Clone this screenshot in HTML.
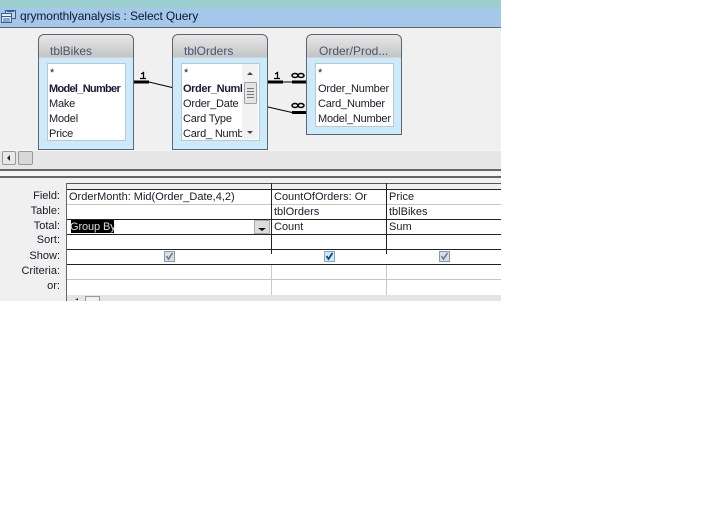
<!DOCTYPE html>
<html><head><meta charset="utf-8">
<style>
html,body{margin:0;padding:0;background:#fff}
body{width:704px;height:528px;position:relative;overflow:hidden;font-family:"Liberation Sans",sans-serif;font-size:11px;color:#1a1a2a}
.a{position:absolute}
.t{position:absolute;white-space:nowrap;line-height:15px;height:15px}
.f{letter-spacing:-.2px}
.tbl{position:absolute;box-sizing:border-box;border:1px solid #5a6670;border-radius:6px 6px 0 0;background:linear-gradient(#e8e8e8 0,#c4c4c4 22px,#cdeafb 23px,#cdeafb 100%)}
.tbl .h{position:absolute;left:11px;top:9px;font-size:12px;color:#46566e;white-space:nowrap}
.list{position:absolute;background:#fff;border:1px solid #b4c8d6;box-sizing:border-box;overflow:hidden}
.h1{position:absolute;left:66px;width:435px;height:1px;background:#222}
.v{position:absolute;width:1px}
.lab{position:absolute;right:644px;white-space:nowrap;line-height:15px;font-size:11px}
.cb{position:absolute;width:11px;height:11px;box-sizing:border-box;border:1px solid #8a9aa8;background:#d6dee6}
</style></head><body>
<div class="a" style="left:0;top:0;width:501px;height:8px;background:#9ccfcd"></div>
<div class="a" style="left:0;top:8px;width:501px;height:19px;background:#a4c8ec"></div>
<div class="a" style="left:0;top:27px;width:501px;height:1px;background:#666"></div>
<svg class="a" style="left:1px;top:9px" width="15" height="15" viewBox="0 0 15 15"><rect x="4.5" y="1.5" width="10" height="8" fill="#b8d0ea" stroke="#3a5c90"/><rect x="0.5" y="4.5" width="10" height="9" fill="#e8f0f8" stroke="#3a5c90"/><path d="M0 7.500h10M2 10h7M2 12h7M6 2.500h7" stroke="#3a5c90" fill="none"/></svg>
<div class="t" style="left:20px;top:8px;font-size:12px;line-height:17px;color:#101828;letter-spacing:-.1px">qrymonthlyanalysis : Select Query</div>

<div class="a" style="left:0;top:28px;width:501px;height:122px;background:#f0f0f0"></div>
<div class="a" style="left:0;top:150px;width:501px;height:18px;background:#e6e6e6;border-top:1px solid #f6f6f6;box-sizing:border-box"></div>

<div class="tbl" style="left:38px;top:34px;width:96px;height:116px">
 <div class="h">tblBikes</div>
 <div class="list" style="left:8px;top:28px;width:79px;height:78px"></div>
</div>
<div class="t" style="left:50px;top:66px">*</div>
<div class="t" style="left:49px;top:82px;font-weight:bold;letter-spacing:-.7px;color:#1a1a3a">Model_Number</div>
<div class="t f" style="left:49px;top:97px">Make</div>
<div class="t f" style="left:49px;top:112px">Model</div>
<div class="t f" style="left:49px;top:127px">Price</div>

<div class="tbl" style="left:172px;top:34px;width:96px;height:116px">
 <div class="h">tblOrders</div>
 <div class="list" style="left:8px;top:28px;width:79px;height:78px"></div>
</div>
<div class="t" style="left:184px;top:66px">*</div>
<div class="a" style="left:183px;top:82px;width:59px;height:58px;overflow:hidden">
 <div class="t" style="left:0;top:0;font-weight:bold;letter-spacing:-.4px;color:#1a1a3a">Order_Number</div>
 <div class="t f" style="left:0;top:15px">Order_Date</div>
 <div class="t f" style="left:0;top:30px">Card Type</div>
 <div class="t f" style="left:0;top:45px">Card_ Number</div>
</div>
<div class="a" style="left:242px;top:64px;width:16px;height:75px;background:#f2f2f2"></div>
<svg class="a" style="left:242px;top:64px" width="16" height="75" viewBox="0 0 16 75"><path d="M5 11l3-3 3 3z" fill="#444"/><rect x="2.5" y="18.500" width="12" height="21" rx="1" fill="#e4e4e4" stroke="#a0a0a0"/><path d="M5 24.500h7M5 27.500h7M5 30.500h7M5 33.500h7" stroke="#777"/><path d="M5 67l3 3 3-3z" fill="#444"/></svg>

<div class="tbl" style="left:306px;top:34px;width:96px;height:101px">
 <div class="h" style="left:12px">Order/Prod...</div>
 <div class="list" style="left:8px;top:28px;width:79px;height:64px"></div>
</div>
<div class="t" style="left:318px;top:66px">*</div>
<div class="t f" style="left:318px;top:82px">Order_Number</div>
<div class="t f" style="left:318px;top:97px">Card_Number</div>
<div class="t f" style="left:318px;top:112px">Model_Number</div>

<svg class="a" style="left:130px;top:66px" width="190" height="54" viewBox="0 0 190 54">
<path d="M4 16h15" stroke="#000" stroke-width="3"/><path d="M19 16l23 5.500" stroke="#000" stroke-width="1"/>
<path d="M138 16h15M162 16h14" stroke="#000" stroke-width="3"/><path d="M153 16h9" stroke="#000"/>
<path d="M138 41l24 5.500" stroke="#000"/><path d="M162 46.500h14" stroke="#000" stroke-width="3"/>
<path d="M11 8l2.500-1.500v6M10 12.500h6" stroke="#000" fill="none" stroke-width="1.300"/>
<path d="M145 8l2.500-1.500v6M144 12.500h6" stroke="#000" fill="none" stroke-width="1.300"/>
<g fill="none" stroke="#000" stroke-width="1.500"><ellipse cx="165" cy="9.500" rx="3" ry="2"/><ellipse cx="171" cy="9.500" rx="3" ry="2"/><ellipse cx="165" cy="39.500" rx="3" ry="2"/><ellipse cx="171" cy="39.500" rx="3" ry="2"/></g>
</svg>

<div class="a" style="left:2px;top:151px;width:14px;height:14px;box-sizing:border-box;border:1px solid #999;border-radius:2px;background:#e8e8e8"></div>
<svg class="a" style="left:2px;top:151px" width="14" height="14"><path d="M5 7l3-3v6z" fill="#222"/></svg>
<div class="a" style="left:18px;top:151px;width:15px;height:14px;box-sizing:border-box;border:1px solid #999;border-radius:2px;background:#d8d8d8"></div>

<div class="a" style="left:0;top:168px;width:501px;height:1px;background:#e8e8e8"></div>
<div class="a" style="left:0;top:169px;width:501px;height:2px;background:#666"></div>
<div class="a" style="left:0;top:171px;width:501px;height:5px;background:#f4f4f4"></div>
<div class="a" style="left:0;top:176px;width:501px;height:2px;background:#666"></div>
<div class="a" style="left:0;top:178px;width:501px;height:123px;background:#f0f0f0"></div>
<div class="a" style="left:66px;top:183px;width:435px;height:112px;background:#fff"></div>
<div class="a" style="left:66px;top:183px;width:435px;height:6px;background:#f0f0f0"></div>
<div class="a" style="left:66px;top:295px;width:435px;height:6px;background:#e4e4e4"></div>
<div class="a" style="left:85px;top:296px;width:15px;height:5px;box-sizing:border-box;border:1px solid #999;border-bottom:0;background:#f0f0f0"></div>
<svg class="a" style="left:74px;top:297px" width="8" height="4"><path d="M1 3l3-2v2z" fill="#222"/></svg>

<div class="h1" style="top:183px;background:#555"></div>
<div class="h1" style="top:189px"></div>
<div class="h1" style="top:204px;background:#c4c4c4"></div>
<div class="h1" style="top:219px"></div>
<div class="h1" style="top:234px"></div>
<div class="h1" style="top:249px"></div>
<div class="h1" style="top:264px"></div>
<div class="h1" style="top:279px;background:#c4c4c4"></div>

<div class="v" style="left:66px;top:183px;height:118px;background:#666"></div>
<div class="v" style="left:271px;top:183px;height:71px;background:#222"></div>
<div class="v" style="left:271px;top:265px;height:30px;background:#c8c8c8"></div>
<div class="v" style="left:386px;top:183px;height:71px;background:#222"></div>
<div class="v" style="left:386px;top:265px;height:30px;background:#c8c8c8"></div>

<div class="lab" style="top:189px">Field:</div>
<div class="lab" style="top:204px">Table:</div>
<div class="lab" style="top:219px">Total:</div>
<div class="lab" style="top:233px">Sort:</div>
<div class="lab" style="top:249px">Show:</div>
<div class="lab" style="top:264px">Criteria:</div>
<div class="lab" style="top:279px">or:</div>

<div class="t" style="left:69px;top:190px">OrderMonth: Mid(Order_Date,4,2)</div>
<div class="t" style="left:274px;top:190px">CountOfOrders: Or</div>
<div class="t" style="left:389px;top:190px">Price</div>
<div class="t" style="left:274px;top:205px">tblOrders</div>
<div class="t" style="left:389px;top:205px">tblBikes</div>
<div class="a" style="left:71px;top:220px;width:43px;height:13px;background:#000"></div>
<div class="t" style="left:70px;top:220px;color:#ddd;letter-spacing:-.1px">Group By</div>
<div class="t" style="left:274px;top:220px">Count</div>
<div class="t" style="left:389px;top:220px">Sum</div>
<div class="a" style="left:254px;top:220px;width:16px;height:14px;box-sizing:border-box;border:1px solid #aaa;background:#dcdcdc"></div>
<svg class="a" style="left:254px;top:220px" width="16" height="14"><path d="M4 8h8l-4 3z" fill="#111"/></svg>

<div class="cb" style="left:164px;top:251px"></div>
<div class="cb" style="left:324px;top:251px;border-color:#7ab0c0;background:#cfe6f6"></div>
<div class="cb" style="left:439px;top:251px"></div>
<svg class="a" style="left:164px;top:251px" width="11" height="11"><path d="M2.500 5l2 3 4-6" fill="none" stroke="#66788c" stroke-width="1.500"/></svg>
<svg class="a" style="left:324px;top:251px" width="11" height="11"><path d="M2.500 5l2 3 4-6" fill="none" stroke="#1c3c78" stroke-width="1.700"/></svg>
<svg class="a" style="left:439px;top:251px" width="11" height="11"><path d="M2.500 5l2 3 4-6" fill="none" stroke="#66788c" stroke-width="1.500"/></svg>
</body></html>
